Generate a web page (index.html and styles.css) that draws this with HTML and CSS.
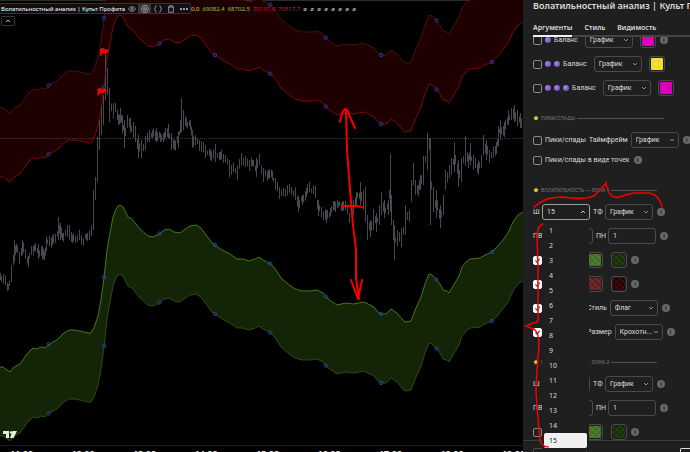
FILE: index.html
```html
<!DOCTYPE html>
<html lang="ru">
<head>
  <meta charset="UTF-8">
  <meta name="viewport" content="width=device-width, initial-scale=1.0">
  <title>Волатильностный анализ | Культ Профита</title>
  <link rel="stylesheet" href="styles.css">
</head>
<body>
  <div class="app">
    <main class="chart">
      <svg id="plot" class="plot" viewBox="0 0 523 452" preserveAspectRatio="none" role="img" aria-label="График цены с зонами волатильности"></svg>

      <div class="legend">
        <div class="indicator">
          <span class="indicator-name">Волатильностный анализ | Культ Профита</span>
          <div class="tools">
            <button type="button" aria-label="Скрыть"><svg viewBox="0 0 12 12"><path d="M.5 6Q6 -1 11.500 6Q6 13 .5 6Z"/><circle cx="6" cy="6" r="1.700"/></svg></button>
            <button type="button" class="active" aria-label="Настройки"><svg viewBox="0 0 12 12"><path d="M3.500 1h5L11.400 6 8.500 11H3.500L.6 6Z"/><circle cx="6" cy="6" r="2"/></svg></button>
            <button type="button" aria-label="Исходный код"><svg viewBox="0 0 12 12"><path d="M4 1Q2 1 2 3.500T.5 6Q2 6.500 2 8.500T4 11M8 1Q10 1 10 3.500T11.500 6Q10 6.500 10 8.500T8 11"/></svg></button>
            <button type="button" aria-label="Удалить"><svg viewBox="0 0 12 12"><path d="M1.500 3h9M4 3V1h4v2M2.500 3v8h7V3"/></svg></button>
            <button type="button" aria-label="Ещё"><svg viewBox="0 0 12 12" class="dots"><circle cx="1.500" cy="6" r="1.500"/><circle cx="6" cy="6" r="1.500"/><circle cx="10.500" cy="6" r="1.500"/></svg></button>
          </div>
        </div>
        <div class="values">
          <span class="yellow">0,0</span>
          <span class="green">69082,4</span>
          <span class="green">68702,5</span>
          <span class="red">70137,8</span>
          <span class="wine">70517,7</span>
          <span class="empty">ø</span><span class="empty">ø</span><span class="empty">ø</span><span class="empty">ø</span><span class="empty">ø</span><span class="empty">ø</span><span class="empty">ø</span><span class="empty">ø</span>
        </div>
      </div>
      <button type="button" class="collapse" aria-label="Свернуть"><svg viewBox="0 0 8 8"><path d="M2 5l2-2 2 2"/></svg></button>
    </main>

    <aside class="panel">
      <h1>Волатильностный анализ | Культ Профита</h1>
      <nav class="tabs">
        <button type="button" class="active">Аргументы</button>
        <button type="button">Стиль</button>
        <button type="button">Видимость</button>
      </nav>

      <form class="fields">
        <div class="group">
          <div class="row">
            <label class="check"><input type="checkbox"><i class="ball"></i>Баланс</label>
            <select class="after-check" aria-label="Таймфрейм баланса 1"><option>График</option></select>
            <button type="button" class="swatch magenta" aria-label="Цвет"></button>
            <span class="info">i</span>
          </div>
          <div class="row">
            <label class="check"><input type="checkbox"><i class="ball"></i><i class="ball"></i>Баланс</label>
            <select class="after-check" aria-label="Таймфрейм баланса 2"><option>График</option></select>
            <button type="button" class="swatch yellow" aria-label="Цвет"></button>
          </div>
          <div class="row">
            <label class="check"><input type="checkbox"><i class="ball"></i><i class="ball"></i><i class="ball"></i>Баланс</label>
            <select class="after-check" aria-label="Таймфрейм баланса 3"><option>График</option></select>
            <button type="button" class="swatch magenta" aria-label="Цвет"></button>
          </div>
        </div>

        <h2 class="wide"><svg viewBox="0 0 10 10"><path d="M5 .5l1.400 2.800 3.100.400-2.200 2.200.500 3.100L5 7.500 2.200 9l.500-3.100L.5 3.700l3.100-.400z"/></svg>ПИКИ/СПАДЫ</h2>
        <div class="group tight">
          <div class="row">
            <label class="check"><input type="checkbox">Пики/спады</label>
            <label for="peak-tf">Таймфрейм</label>
            <select id="peak-tf"><option>График</option></select>
            <span class="info">i</span>
          </div>
          <div class="row">
            <label class="check"><input type="checkbox">Пики/спады в виде точек</label>
            <span class="info">i</span>
          </div>
        </div>

        <h2><svg viewBox="0 0 10 10"><path d="M5 .5l1.400 2.800 3.100.400-2.200 2.200.500 3.100L5 7.500 2.200 9l.500-3.100L.5 3.700l3.100-.400z"/></svg>ВОЛАТИЛЬНОСТЬ — ЗОНА 1</h2>
        <div class="group">
          <div class="row">
            <label class="short" for="w1">Ш</label>
            <select id="w1" class="open"><option>15</option></select>
            <label class="pair" for="tf1">ТФ</label>
            <select id="tf1"><option>График</option></select>
            <span class="info">i</span>
          </div>
          <div class="row">
            <label class="pair" for="pv1">ПВ</label>
            <input id="pv1" class="text" type="text">
            <label class="pair" for="pn1">ПН</label>
            <input id="pn1" class="text" type="text" value="1">
            <span class="info">i</span>
          </div>
          <div class="row">
            <div class="check name"><input type="checkbox" aria-label="Нижняя зона" checked></div>
            <button type="button" class="swatch lime" aria-label="Цвет линии"></button>
            <button type="button" class="swatch forest" aria-label="Цвет фона"></button>
            <span class="info">i</span>
          </div>
          <div class="row">
            <div class="check name"><input type="checkbox" aria-label="Верхняя зона" checked></div>
            <button type="button" class="swatch brick" aria-label="Цвет линии"></button>
            <button type="button" class="swatch blood" aria-label="Цвет фона"></button>
            <span class="info">i</span>
          </div>
          <div class="row">
            <div class="check name"><input type="checkbox" aria-label="Метки" checked></div>
            <label for="style1">Стиль</label>
            <select id="style1"><option>Флаг</option></select>
            <span class="info">i</span>
          </div>
          <div class="row">
            <div class="check name"><input type="checkbox" aria-label="Размер меток" checked></div>
            <label for="size1">Размер</label>
            <select id="size1"><option>Крохотн...</option></select>
            <span class="info">i</span>
          </div>
        </div>

        <h2><svg viewBox="0 0 10 10"><path d="M5 .5l1.400 2.800 3.100.400-2.200 2.200.500 3.100L5 7.500 2.200 9l.500-3.100L.5 3.700l3.100-.400z"/></svg>ВОЛАТИЛЬНОСТЬ — ЗОНА 2</h2>
        <div class="group">
          <div class="row">
            <label class="short" for="w2">Ш</label>
            <select id="w2"><option></option></select>
            <label class="pair" for="tf2">ТФ</label>
            <select id="tf2"><option>График</option></select>
            <span class="info">i</span>
          </div>
          <div class="row">
            <label class="pair" for="pv2">ПВ</label>
            <input id="pv2" class="text" type="text">
            <label class="pair" for="pn2">ПН</label>
            <input id="pn2" class="text" type="text" value="1">
            <span class="info">i</span>
          </div>
          <div class="row">
            <div class="check name"><input type="checkbox" aria-label="Нижняя зона"></div>
            <button type="button" class="swatch lime" aria-label="Цвет линии"></button>
            <button type="button" class="swatch forest" aria-label="Цвет фона"></button>
            <span class="info">i</span>
          </div>
        </div>
      </form>

      <footer>
        <button type="button" class="defaults" aria-label="По умолчанию"></button>
        <button type="button" class="ok" aria-label="Ок"></button>
      </footer>

      <ul class="menu" role="listbox" aria-label="Ш">
        <li role="option">1</li>
        <li role="option">2</li>
        <li role="option">3</li>
        <li role="option">4</li>
        <li role="option">5</li>
        <li role="option">6</li>
        <li role="option">7</li>
        <li role="option">8</li>
        <li role="option">9</li>
        <li role="option">10</li>
        <li role="option">11</li>
        <li role="option">12</li>
        <li role="option">13</li>
        <li role="option">14</li>
        <li role="option" aria-selected="true">15</li>
      </ul>

      <!-- red pen marks, origin is the panel corner -->
      <svg class="marks" viewBox="0 0 167 452">
        <path d="M11 207Q17 202 24 199Q32 197 40 197Q52 199 64 198Q71 197 74 193Q80 187 83 183Q84 190 87 194Q90 198 96 197Q104 194 112 193H126Q132 194 135 198Q138 202 139 207"/>
        <path d="M20 224Q15 225 14 235L15 270V320Q15 323 10 323L3 326L12 330Q16 333 16 346Q14 366 13 392Q15 420 17 440Q18 446 25 447"/>
      </svg>
    </aside>
  </div>
  <script src="script.js"></script>
</body>
</html>
```

FILE: styles.css
```css
:root {
  --panel: #1f1f1f;
  --border: #4a4a4a;
  --text: #dbdbdb;
  --muted: #7c7c7c;
  --pen: #f40000;
}

* {
  margin: 0;
  padding: 0;
  box-sizing: border-box;
}

body {
  font-family: "Noto Sans", "Open Sans", sans-serif;
  font-size: 7px;
  line-height: 10px;
  color: var(--text);
  background: #000;
}

button,
input,
select {
  font: inherit;
  color: inherit;
  background: none;
  border: none;
}

.app {
  display: flex;
  height: 100vh;
  overflow: hidden;
}

/* Chart */
.chart {
  position: relative;
  flex: 1;
  min-width: 0;
  border-top: 1px solid #2c2c2c;
}

.plot {
  position: absolute;
  inset: -1px 0 0;
  width: 100%;
  height: 100vh;
}

.plot path {
  fill: none;
}

.plot .red-band {
  fill: #1f0001;
}

.plot .green-band {
  fill: #142406;
}

.plot .red-top {
  stroke: #4a1010;
}

.plot .red-bottom {
  stroke: #7e0505;
}

.plot .green-top {
  stroke: #407c0e;
}

.plot .green-bottom {
  stroke: #294d10;
}

.plot .price {
  stroke: #484850;
}

.plot .level {
  stroke: #3a3a3a;
  stroke-dasharray: 1 1;
}

.plot .axis {
  stroke: #1c1c1c;
}

.plot .point {
  fill: none;
  stroke: #2440a8;
}

.plot text {
  font-size: 9px;
  font-weight: 700;
  fill: #e8e8e8;
  text-anchor: middle;
}

.plot .logo {
  fill: #e4efdc;
}

.plot .pen {
  stroke: var(--pen);
  stroke-width: 2;
  stroke-linecap: round;
  stroke-linejoin: round;
}

.plot .pen.flag {
  fill: var(--pen);
  stroke-width: 1;
}

.legend {
  position: relative;
  display: flex;
  align-items: center;
  margin-top: 2px;
  font-size: 6px;
  white-space: nowrap;
}

.indicator {
  display: flex;
  align-items: center;
  justify-content: space-between;
  flex: none;
  width: 191px;
  height: 11px;
  padding-left: 1px;
  background: #101012;
  border: 1px solid #1a3080;
  border-left: none;
  border-radius: 0 2px 2px 0;
}

.indicator-name {
  color: #fff;
}

.tools {
  display: flex;
}

.tools button {
  display: flex;
  align-items: center;
  justify-content: center;
  width: 13px;
  height: 9px;
}

.tools .active {
  background: #3a3a3a;
}

.tools svg {
  width: 8px;
  height: 8px;
  fill: none;
  stroke: #c8c8c8;
}

.tools .dots {
  fill: #c8c8c8;
  stroke: none;
}

.values {
  display: flex;
  gap: 3px;
}

.values .yellow {
  color: #e8d83a;
}

.values .green {
  color: #8cc63f;
}

.values .red {
  color: #d81818;
}

.values .wine {
  color: #a83a40;
}

.values .empty {
  width: 4px;
}

.collapse {
  position: relative;
  display: flex;
  align-items: center;
  justify-content: center;
  width: 14px;
  height: 10px;
  margin: 2px 1px;
  border: 1px solid #333;
  border-radius: 1px;
}

.collapse svg {
  width: 8px;
  height: 8px;
  fill: none;
  stroke: #ccc;
}

/* Settings panel */
.panel {
  position: relative;
  display: flex;
  flex-direction: column;
  flex: 0 0 167px;
  min-width: 0;
  background: var(--panel);
  overflow: hidden;
}

.panel h1 {
  padding-left: 10px;
  font-size: 9px;
  font-weight: 600;
  line-height: 12px;
  white-space: nowrap;
}

.tabs {
  display: flex;
  gap: 12px;
  margin-left: 10px;
  padding-top: 8px;
  box-shadow: inset 0 -2px #444;
}

.tabs button {
  height: 17px;
  padding-bottom: 2px;
  font-size: 7px;
  font-weight: 600;
}

.tabs .active {
  border-bottom: 2px solid #f0f0f0;
  padding-bottom: 0;
}

.fields {
  flex: 1;
  min-height: 0;
  padding-left: 10px;
  font-family: Roboto, "Noto Sans", sans-serif;
  overflow: hidden;
}

.group {
  display: flex;
  flex-direction: column;
  gap: 8px;
}

.group:first-child {
  margin-top: -5px;
}

.group.tight {
  gap: 4px;
}

.row {
  display: flex;
  align-items: center;
  gap: 3px;
  height: 16px;
  white-space: nowrap;
}

.row label,
.row select,
.row .text,
.row .swatch {
  flex: none;
}

.check {
  display: flex;
  align-items: center;
  flex: none;
  gap: 3px;
}

.check input {
  appearance: none;
  width: 9px;
  height: 9px;
  border: 1px solid #8a8a8a;
  border-radius: 2px;
}

.check input:checked {
  background: #fff url("data:image/svg+xml,%3Csvg xmlns='http://www.w3.org/2000/svg' viewBox='0 0 8 8'%3E%3Cpath d='M1.500 4l2 2 3-4' fill='none' stroke='%23222' stroke-width='1.200'/%3E%3C/svg%3E");
  border-color: #fff;
}

.ball {
  width: 6px;
  height: 6px;
  border-radius: 50%;
  background: radial-gradient(circle at 35% 35%, #a98be8, #5c3cae);
}

.name {
  width: 51px;
}

.short {
  width: 6px;
}

.pair {
  width: 9px;
}

select,
.text {
  width: 48px;
  height: 16px;
  padding: 0 4px;
  border: 1px solid var(--border);
  border-radius: 3px;
}

select {
  appearance: none;
  background: url("data:image/svg+xml,%3Csvg xmlns='http://www.w3.org/2000/svg' viewBox='0 0 6 6'%3E%3Cpath d='M1 2l2 2 2-2' fill='none' stroke='%23bbb' stroke-width='.7'/%3E%3C/svg%3E") no-repeat right 3px center / 6px 6px;
}

select.open {
  border-color: #a0a0a0;
  background-image: url("data:image/svg+xml,%3Csvg xmlns='http://www.w3.org/2000/svg' viewBox='0 0 6 6'%3E%3Cpath d='M1 4l2-2 2 2' fill='none' stroke='%23fff' stroke-width='.8'/%3E%3C/svg%3E");
}

.after-check,
.after-check + .swatch {
  margin-left: 4px;
}

.swatch {
  width: 16px;
  height: 16px;
  border: 1px solid var(--border);
  border-radius: 3px;
  padding: 1px;
  background-clip: content-box;
}

.swatch + .swatch {
  margin-left: 5px;
}

.swatch.magenta {
  background-color: #dc00b8;
}

.swatch.yellow {
  background-color: #f2de30;
}

.swatch.lime {
  background-image: repeating-conic-gradient(#426c26 0 25%, #4f7c30 0 50%);
  background-size: 6px 6px;
}

.swatch.forest {
  background-image: repeating-conic-gradient(#172a0a 0 25%, #233c14 0 50%);
  background-size: 6px 6px;
}

.swatch.brick {
  background-image: repeating-conic-gradient(#5c1e20 0 25%, #6e2c2e 0 50%);
  background-size: 6px 6px;
}

.swatch.blood {
  background-image: repeating-conic-gradient(#280203 0 25%, #3c0b0c 0 50%);
  background-size: 6px 6px;
}

.info {
  flex: none;
  width: 8px;
  height: 8px;
  margin-left: 1px;
  border-radius: 50%;
  background: #686868;
  color: var(--panel);
  font-size: 6px;
  font-weight: 700;
  line-height: 8px;
  text-align: center;
}

.panel h2 {
  display: flex;
  align-items: center;
  gap: 2px;
  width: 124px;
  height: 10px;
  margin: 17px 0 9px;
  font-family: "Noto Sans", sans-serif;
  font-size: 5px;
  font-weight: 400;
  color: var(--muted);
  white-space: nowrap;
}

.panel h2.wide {
  width: 131px;
}

.panel h2::after {
  content: "";
  flex: 1;
  height: 1px;
  background: #505050;
}

.panel h2 svg {
  width: 6px;
  height: 6px;
  fill: #f6cf2c;
}

.panel footer {
  display: flex;
  justify-content: space-between;
  align-items: flex-end;
  height: 12px;
  padding-left: 10px;
  border-top: 1px solid #3c3c3c;
}

.panel footer button {
  height: 4px;
  border: 1px solid var(--border);
  border-bottom: none;
  border-radius: 2px 2px 0 0;
}

.defaults {
  width: 54px;
}

.panel footer .ok {
  width: 10px;
  border-color: #ddd;
  border-right: none;
  border-radius: 2px 0 0 0;
}

.menu {
  position: absolute;
  top: 220px;
  left: 19px;
  width: 47px;
  padding: 3px 2px;
  background: var(--panel);
  list-style: none;
}

.menu li {
  height: 15px;
  padding-left: 5px;
  line-height: 15px;
}

.menu [aria-selected="true"] {
  background: #f0f0f0;
  border-radius: 2px;
  color: #222;
}

.marks {
  position: absolute;
  top: 0;
  left: 0;
  width: 167px;
  height: 452px;
  fill: none;
  stroke: var(--pen);
  stroke-width: 1.5;
  stroke-linecap: round;
  pointer-events: none;
}
```

FILE: script.js
```javascript
const plot = document.getElementById('plot');

// volatility curve [x, y], all four lines are shifts of it
const curve = [
  [0,367],[3,367],[7,370],[10,372],[14,367],[20,364],[27,354],[33,348],[37,349],[41,347],[45,348],
  [49,344],[57,340],[64,333],[69,330],[74,330],[80,331],[88,333],[91,333],[94,328],[98,316],[101,300],
  [104,278],[107,250],[110,233],[113,217],[116,209],[118,206],[120,205],[123,207],[128,217],[132,219],
  [140,229],[148,236],[153,237],[159,234],[164,230],[169,229],[174,232],[180,233],[184,230],[190,226],
  [196,225],[201,228],[206,235],[212,243],[215,245],[222,250],[230,254],[237,259],[243,259],[249,261],
  [255,259],[259,257],[263,260],[271,264],[276,270],[281,278],[288,284],[295,289],[302,291],[310,291],
  [317,290],[323,293],[326,297],[331,301],[337,305],[346,303],[353,304],[364,302],[368,304],[374,307],
  [378,312],[381,314],[386,314],[391,309],[397,313],[401,318],[405,322],[411,321],[416,308],[421,297],
  [425,284],[429,274],[432,275],[437,280],[440,284],[443,290],[447,291],[449,293],[452,288],[459,276],
  [462,267],[466,262],[470,259],[480,258],[485,255],[492,252],[498,246],[503,240],[508,233],[513,222],
  [518,215],[523,212]
];

// price bars [x, high, low]
const price = [
  [0,273,280],[3,274,284],[8,284,290],[11,265,282],[14,240,262],[16,244,252],[19,252,264],[22,240,255],
  [25,249,258],[28,256,267],[31,246,255],[34,245,251],[38,244,259],[42,246,260],[44,251,260],[46,236,251],
  [49,236,246],[52,236,245],[55,234,243],[58,217,240],[60,223,240],[62,233,240],[67,225,237],[69,225,240],
  [72,235,243],[75,236,243],[79,233,240],[83,238,244],[86,234,240],[91,228,236],[93,190,230],[95,177,200],
  [97,137,182],[99,120,150],[101,105,135],[103,95,125],[105,52,100],[107,68,95],[109,88,122],[113,103,118],
  [115,104,112],[118,114,125],[120,108,123],[122,115,133],[124,120,148],[127,115,128],[130,118,133],
  [133,122,138],[135,126,142],[138,135,158],[141,140,158],[145,136,150],[149,130,142],[152,130,138],
  [156,128,142],[160,133,142],[164,132,140],[168,124,138],[171,133,150],[174,140,150],[178,132,148],
  [180,120,133],[181,98,132],[183,110,130],[186,118,127],[190,120,130],[192,130,148],[195,135,145],
  [199,140,151],[201,141,152],[205,145,158],[210,150,160],[215,144,162],[220,152,160],[225,155,162],
  [229,160,177],[233,165,172],[237,165,180],[241,153,165],[245,156,167],[249,160,168],[252,160,166],
  [256,158,177],[259,155,165],[263,168,182],[268,170,178],[272,171,180],[275,178,190],[279,187,198],
  [283,189,196],[287,185,195],[291,187,194],[295,188,200],[298,196,212],[302,195,205],[306,188,197],
  [309,182,192],[313,188,194],[315,186,198],[318,200,216],[321,207,217],[326,210,223],[330,208,216],
  [334,201,210],[338,202,207],[342,201,210],[347,205,213],[349,213,223],[353,200,215],[356,192,205],
  [360,182,205],[363,190,210],[365,187,222],[367,215,240],[370,220,237],[373,209,230],[376,213,232],
  [379,205,225],[381,192,215],[384,200,218],[388,200,215],[390,154,212],[391,195,225],[393,220,240],
  [394,225,260],[397,230,246],[401,228,247],[405,205,235],[409,210,220],[411,180,202],[413,163,185],
  [415,180,195],[418,185,196],[420,175,190],[423,156,185],[427,133,170],[429,138,150],[430,138,225],
  [433,187,212],[436,190,218],[440,205,228],[443,195,215],[445,170,190],[449,165,178],[451,158,175],
  [454,142,172],[458,160,187],[461,158,182],[465,136,166],[468,155,168],[470,143,165],[473,155,170],
  [478,160,175],[481,155,168],[483,135,155],[486,140,160],[489,150,163],[493,148,158],[496,142,154],
  [498,126,146],[500,120,140],[504,122,137],[508,110,125],[511,108,120],[514,105,122],[517,110,126],
  [520,113,128]
];

function at(points, x, i) {
  let n = 1;
  while (n < points.length - 1 && points[n][0] < x) n++;
  const a = points[n - 1];
  const b = points[n];
  return a[i] + (b[i] - a[i]) * (x - a[0]) / (b[0] - a[0]);
}

function add(tag, attrs, text) {
  const el = document.createElementNS('http://www.w3.org/2000/svg', tag);
  for (const key in attrs) el.setAttribute(key, attrs[key]);
  if (text) el.textContent = text;
  plot.appendChild(el);
}

function line(points, dy) {
  return points.map(([x, y]) => x + ' ' + (y + dy)).join('L');
}

function band(name, top, bottom) {
  const back = curve.slice().reverse();
  add('path', { class: name + '-band', d: 'M' + line(curve, top) + 'L' + line(back, bottom) + 'Z' });
  add('path', { class: name + '-top', d: 'M' + line(curve, top) });
  add('path', { class: name + '-bottom', d: 'M' + line(curve, bottom) });
}

band('red', -259, -190);
band('green', 0, 69);
add('path', { class: 'level', d: 'M0 138.5H523' });

// bars between the key ones get a bit of deterministic noise
let bars = price.map(([x, high, low]) => `M${x + 0.5} ${high}V${low}`).join('');
for (let x = 1; x < 522; x += 2) {
  const mid = (at(price, x, 1) + at(price, x, 2)) / 2;
  const size = 2 + Math.abs(Math.sin(x * 12.9)) * 3;
  const shift = Math.sin(x * 7.3) * 2;
  bars += `M${x + 0.5} ${mid + shift - size}V${mid + shift + size}`;
}
add('path', { class: 'price', d: bars });

for (let n = 0; n < 9; n++) {
  const x = 48.7 + n * 55.4;
  for (const dy of [-259, -190, 0, 69]) {
    add('circle', { class: 'point', cx: x, cy: at(curve, x, 1) + dy, r: 1.7 });
  }
}

add('path', { class: 'logo', d: 'M3 431h6v7H6v-4H3zM12.500 431H17l-3.500 7H10z' });
add('circle', { class: 'logo', cx: 11, cy: 432.5, r: 1.3 });

add('path', { class: 'axis', d: 'M0 445.5H523' });
for (let n = 0; n < 9; n++) {
  add('text', { x: 21.5 + n * 61.5, y: 457 }, (11 + n) + ':00');
}

// red pen
add('path', { class: 'pen flag', d: 'M100.5 55V49L103 48.5L105 50L108 49.5V52L105 53L102 52V54ZM98 95V89L100.5 88L102 89.500L106 89V91.500L102 92.500L100 92L99.500 94Z' });
add('path', { class: 'pen', d: 'M340 122Q342 111 345 109Q348 109 350 117L355 128M346 110L347 150L350 190L353 225L356 250V278L359 299M351 280L358 299L362 280M342 206L356 206L362 207' });
```
